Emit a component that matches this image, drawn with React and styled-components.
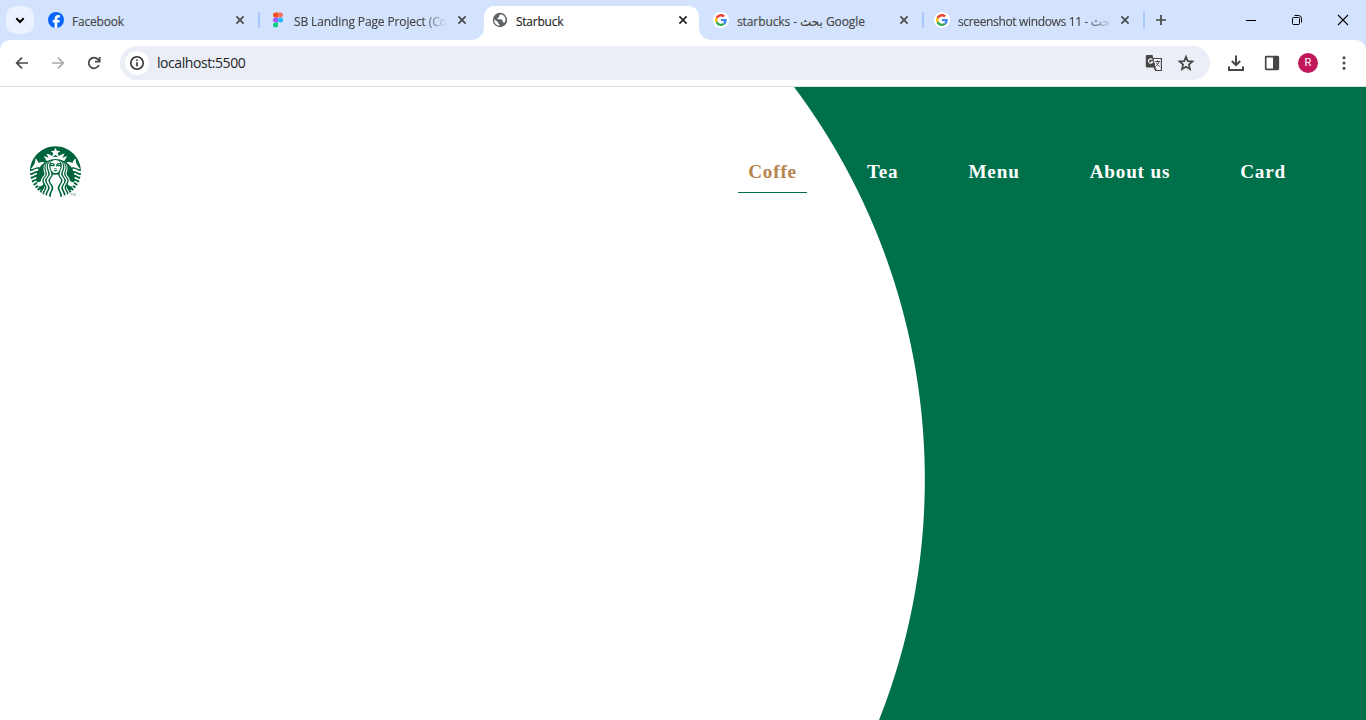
import React from 'react';
import styled, { createGlobalStyle, css } from 'styled-components';
import { SiStarbucks } from 'react-icons/si';

const GlobalStyle = createGlobalStyle`
  * { box-sizing: border-box; }
  body { margin: 0; background: #fff; overflow: hidden; }
  svg { display: block; flex: none; }
`;

const Window = styled.div`
  display: flex;
  flex-direction: column;
  width: 1366px;
  height: 720px;
  background: #d3e2fd;
  overflow: hidden;
  font-family: 'Open Sans', 'Noto Sans', 'DejaVu Sans', sans-serif;
`;

const TabStrip = styled.div`
  display: flex;
  height: 40px;
  flex: none;
  padding-left: 6px;
`;

const TabSearch = styled.div`
  display: flex;
  align-items: center;
  justify-content: center;
  width: 28px;
  height: 28px;
  margin: 6px 6px 0 0;
  border-radius: 10px;
  background: #ebf1fe;
`;

const activeTab = css`
  background: #fff;
  color: #1f1f1f;
  &::before, &::after {
    content: '';
    position: absolute;
    bottom: 0;
    width: 12px;
    height: 12px;
  }
  &::before { left: -12px; background: radial-gradient(circle at 0 0, transparent 11.5px, #fff 12.2px); }
  &::after { right: -12px; background: radial-gradient(circle at 100% 0, transparent 11.5px, #fff 12.2px); }
`;

const Tab = styled.div`
  position: relative;
  display: flex;
  align-items: center;
  width: ${p => (p.$wide ? 216 : 215)}px;
  height: 34px;
  margin-top: 6px;
  padding: 0 8px 6px;
  border-radius: 10px 10px 0 0;
  color: #454746;
  ${p => p.$active && activeTab}
`;

const TabTitle = styled.div`
  flex: 1;
  min-width: 0;
  margin: 3px 8px 0;
  overflow: hidden;
  white-space: nowrap;
  font-size: 12px;
  line-height: 18px;
  letter-spacing: ${p => p.$spacing}px;
  -webkit-text-stroke: 0.15px currentColor;
  ${p => p.$fade && css`mask-image: linear-gradient(to right, #000 128px, transparent 154px);`}
`;

const Divider = styled.div`
  width: 2px;
  height: 16px;
  margin: 12px 2px 0;
  border-radius: 1px;
  background: ${p => (p.$hidden ? 'transparent' : '#a8c7fa')};
`;

const NewTab = styled.div`
  display: flex;
  align-items: center;
  justify-content: center;
  width: 28px;
  height: 40px;
  color: #474747;
`;

const WindowControls = styled.div`
  display: flex;
  margin-left: auto;
`;

const ControlButton = styled.div`
  display: flex;
  align-items: center;
  justify-content: center;
  width: 46px;
  height: 40px;
`;

const Toolbar = styled.div`
  display: flex;
  align-items: center;
  flex: none;
  height: 47px;
  padding: 0 12px 1px 4px;
  background: #fff;
  border-bottom: 1px solid #e0e1e3;
  border-radius: 10px 10px 0 0;
`;

const ToolButton = styled.div`
  display: flex;
  align-items: center;
  justify-content: center;
  width: 36px;
  height: 34px;
  color: ${p => (p.$disabled ? '#acacac' : '#474747')};
`;

const ActionGroup = styled.div`
  display: flex;
  margin: 0 -8px 0 8px;
`;

const AddressBar = styled.div`
  display: flex;
  align-items: center;
  width: 1090px;
  height: 34px;
  margin-left: 8px;
  padding: 0 8px 0 5px;
  border-radius: 17px;
  background: #ebeef7;
`;

const SiteInfo = styled.div`
  display: flex;
  align-items: center;
  justify-content: center;
  width: 24px;
  height: 24px;
  border-radius: 50%;
  background: #fff;
`;

const Url = styled.div`
  flex: 1;
  padding-left: 8px;
  color: #1f1f1f;
  font-size: 14px;
  line-height: 20px;
  letter-spacing: -0.43px;
`;

const AddressAction = styled.div`
  display: flex;
  align-items: center;
  justify-content: center;
  width: 32px;
`;

const Avatar = styled.div`
  width: 20px;
  height: 20px;
  border-radius: 50%;
  background: #c2185b;
  color: #fff;
  font: 11px/20px Roboto, sans-serif;
  text-align: center;
`;

const Page = styled.main`
  flex: 1;
  background: radial-gradient(circle at 270.3px 392.5px, #fff 654px, #00704a 655px);
`;

const Header = styled.header`
  display: flex;
  align-items: flex-start;
  justify-content: space-between;
  padding: 59px 70px 0 30px;
`;

const Nav = styled.nav`
  display: flex;
  gap: 50px;
  padding-top: 5px;
`;

const NavLink = styled.a`
  height: 42px;
  padding: 0 10px;
  border-bottom: 1px solid ${p => (p.$current ? '#00704a' : 'transparent')};
  color: ${p => (p.$current ? '#b5834e' : '#fff')};
  font: bold 19.2px/42px 'Liberation Serif', serif;
  letter-spacing: 0.8px;
  white-space: nowrap;
`;

const FacebookIcon = () => (
  <svg width="16" height="16" viewBox="0 0 16 16">
    <circle cx="8" cy="8" r="8" fill="#0866ff" />
    <path d="M6.6 15.9V10.6H4.8V8h1.8V6.9c0-2.7 1.2-3.9 3.7-3.9.5 0 1.3.1 1.6.2v2.3l-.9-.1c-1.2 0-1.7.5-1.7 1.7V8h2.5l-.4 2.6H9.3v5.3z" fill="#fff" />
  </svg>
);

const FigmaIcon = () => (
  <svg width="16" height="16" viewBox="0 0 16 16">
    <path d="M8 .5H5.500a2.500 2.500 0 0 0 0 5H8z" fill="#f24e1e" />
    <path d="M8 .5h2.500a2.500 2.500 0 0 1 0 5H8z" fill="#ff7262" />
    <path d="M8 5.500H5.500a2.500 2.500 0 0 0 0 5H8z" fill="#a259ff" />
    <circle cx="10.500" cy="8" r="2.500" fill="#1abcfe" />
    <path d="M8 10.500H5.500A2.500 2.500 0 1 0 8 13z" fill="#0acf83" />
  </svg>
);

const GlobeIcon = () => (
  <svg width="16" height="16" viewBox="0 0 16 16">
    <circle cx="8" cy="8" r="7.200" fill="#5f6368" />
    <path d="M9.3 2.2 7.2 3.3v1.6L5.5 6v1.3h3.8l1.6 1.9v1.3h1.7c2-2.9.8-6.8-3.3-8.3zM2.3 7.3l4 3.2v1.1l1.3 1v1.2C4.1 13.7 1.8 10.5 2.3 7.3z" fill="#fff" />
  </svg>
);

const GoogleIcon = () => (
  <svg width="16" height="16" viewBox="0 0 16 16">
    <circle cx="8" cy="8" r="8" fill="#fff" />
    <g transform="translate(2 2) scale(.25)">
      <path fill="#ea4335" d="M24 9.5c3.5 0 6.700 1.200 9.200 3.600l6.900-6.900C35.900 2.400 30.500 0 24 0 14.600 0 6.500 5.400 2.600 13.200l8 6.200C12.400 13.700 17.700 9.500 24 9.500z" />
      <path fill="#4285f4" d="M47 24.600c0-1.600-.2-3.100-.4-4.600H24v9h12.900c-.6 3-2.300 5.500-4.800 7.200l7.700 6C44.400 38 47 31.800 47 24.600z" />
      <path fill="#fbbc05" d="M10.500 28.600a14.500 14.500 0 0 1 0-9.200l-8-6.200a24 24 0 0 0 0 21.600z" />
      <path fill="#34a853" d="M24 48c6.500 0 11.900-2.100 15.900-5.800l-7.700-6A14.500 14.500 0 0 1 10.500 28.600l-8 6.200C6.500 42.600 14.600 48 24 48z" />
    </g>
  </svg>
);

const CloseIcon = () => (
  <svg width="16" height="16" viewBox="0 0 16 16" stroke="currentColor" strokeWidth="1.6">
    <path d="m4.400 4.400 7.200 7.200m0-7.200-7.200 7.200" />
  </svg>
);

const LineIcon = ({ d, size = 16, width = 1.7 }) => (
  <svg width={size} height={size} viewBox={`0 0 ${size} ${size}`} fill="none" stroke="currentColor" strokeWidth={width}>
    <path d={d} />
  </svg>
);

const ReloadIcon = () => (
  <svg width="16" height="16" viewBox="0 0 16 16" fill="none" stroke="currentColor" strokeWidth="1.8">
    <path d="M12.900 10A5.300 5.300 0 1 1 12 4.500L13.300 6" />
    <path d="M13.600 2v4.700H9" />
  </svg>
);

const InfoIcon = () => (
  <svg width="16" height="16" viewBox="0 0 16 16">
    <circle cx="8" cy="8" r="6.200" fill="none" stroke="#303030" strokeWidth="1.600" />
    <path d="M7.200 7.200h1.600v4H7.200zM7.200 4.500h1.600v1.600H7.200z" fill="#303030" />
  </svg>
);

const TranslateIcon = () => (
  <svg width="18" height="18" viewBox="0 0 18 18">
    <path d="M7 4.500h9.400v12H10.500L9 13z" fill="#f4f6fb" stroke="#474747" strokeWidth="1.200" />
    <path d="M2 1h5.500l3.300 12.500H2a1.200 1.200 0 0 1-1.200-1.200V2.200A1.200 1.200 0 0 1 2 1z" fill="#474747" />
    <path d="M7.400 5.700A2.200 2.200 0 1 0 7.800 7.700H5.600" fill="none" stroke="#fff" strokeWidth="1.100" />
    <path d="M10.300 7.500H15M12.600 6.300v1.200M14 7.600c-.5 2-1.700 3.500-3 4.600M11.300 8.600c.7 1.700 2 3 3.400 4M10.800 13.700v2.300" fill="none" stroke="#474747" strokeWidth="1" />
  </svg>
);

const StarIcon = () => (
  <svg width="18" height="18" viewBox="0 0 18 18" fill="none" stroke="#474747" strokeWidth="1.700">
    <path d="m9 2.800 1.800 4.300 4.700.4-3.600 3.100 1.100 4.600L9 12.700l-4 2.500 1.100-4.600-3.600-3.100 4.700-.4z" />
  </svg>
);

const DownloadIcon = () => (
  <svg width="18" height="18" viewBox="0 0 18 18" fill="none" stroke="currentColor" strokeWidth="2">
    <path d="M9 1.500v9.500M4.800 7 9 11.200 13.200 7M2 12.500V16h14v-3.500" />
  </svg>
);

const PanelIcon = () => (
  <svg width="16" height="16" viewBox="0 0 16 16">
    <rect x="1.700" y="1.700" width="12.600" height="12.600" rx=".6" fill="none" stroke="currentColor" strokeWidth="1.700" />
    <path d="M9 1.500h5.500v13H9z" fill="currentColor" />
  </svg>
);

const MoreIcon = () => (
  <svg width="16" height="16" viewBox="0 0 16 16" fill="currentColor">
    <circle cx="8" cy="2.800" r="1.500" /><circle cx="8" cy="8" r="1.500" /><circle cx="8" cy="13.200" r="1.500" />
  </svg>
);

const LogoMark = styled.div`
  display: flex;
  align-items: flex-end;
  width: 51px;
  height: 51px;
  color: #00643c;
`;

const Trademark = styled.span`
  margin-left: -11px;
  color: #6a9c86;
  font: 4px/4px 'Liberation Sans', sans-serif;
`;

const tabs = [
  { title: 'Facebook', Icon: FacebookIcon, spacing: -0.2, wide: true },
  { title: 'SB Landing Page Project (Copy)', Icon: FigmaIcon, spacing: -0.12, fade: true, wide: true, dividerHidden: true },
  { title: 'Starbuck', Icon: GlobeIcon, spacing: -0.25, active: true, dividerHidden: true },
  { title: 'starbucks - بحث Google', Icon: GoogleIcon, spacing: -0.1 },
  { title: 'screenshot windows 11 - بحث Google', Icon: GoogleIcon, spacing: -0.35, fade: true },
];

const links = ['Coffe', 'Tea', 'Menu', 'About us', 'Card'];

export default function App() {
  return (
    <Window>
      <GlobalStyle />
      <TabStrip>
        <TabSearch><LineIcon d="m4.300 6.300 3.700 3.700 3.700-3.700" width={2} /></TabSearch>
        {tabs.map(({ title, Icon, spacing, active, fade, wide, dividerHidden }) => (
          <React.Fragment key={title}>
            <Tab $active={active} $wide={wide}>
              <Icon />
              <TabTitle $spacing={spacing} $fade={fade}>{title}</TabTitle>
              <CloseIcon />
            </Tab>
            <Divider $hidden={dividerHidden} />
          </React.Fragment>
        ))}
        <NewTab><LineIcon d="M8 3v10M3 8h10" /></NewTab>
        <WindowControls>
          <ControlButton><LineIcon d="M3 8.500h10" width={1} /></ControlButton>
          <ControlButton>
            <LineIcon d="M4.500 5.500h5a1 1 0 0 1 1 1v5a1 1 0 0 1-1 1h-5a1 1 0 0 1-1-1v-5a1 1 0 0 1 1-1zM5.500 3.500h4a3 3 0 0 1 3 3v4" width={1} />
          </ControlButton>
          <ControlButton><LineIcon d="m3 3 10 10M13 3 3 13" width={1.1} /></ControlButton>
        </WindowControls>
      </TabStrip>
      <Toolbar>
        <ToolButton><LineIcon d="M14 8H3M8 2.700 2.700 8 8 13.300" /></ToolButton>
        <ToolButton $disabled><LineIcon d="M2 8h11M8 2.700 13.300 8 8 13.300" /></ToolButton>
        <ToolButton><ReloadIcon /></ToolButton>
        <AddressBar>
          <SiteInfo><InfoIcon /></SiteInfo>
          <Url>localhost:5500</Url>
          <AddressAction><TranslateIcon /></AddressAction>
          <AddressAction><StarIcon /></AddressAction>
        </AddressBar>
        <ActionGroup>
          <ToolButton><DownloadIcon /></ToolButton>
          <ToolButton><PanelIcon /></ToolButton>
          <ToolButton><Avatar>R</Avatar></ToolButton>
          <ToolButton><MoreIcon /></ToolButton>
        </ActionGroup>
      </Toolbar>
      <Page>
        <Header>
          <LogoMark><SiStarbucks size={51} /><Trademark>TM</Trademark></LogoMark>
          <Nav>
            {links.map((label, i) => <NavLink key={label} $current={i === 0}>{label}</NavLink>)}
          </Nav>
        </Header>
      </Page>
    </Window>
  );
}
